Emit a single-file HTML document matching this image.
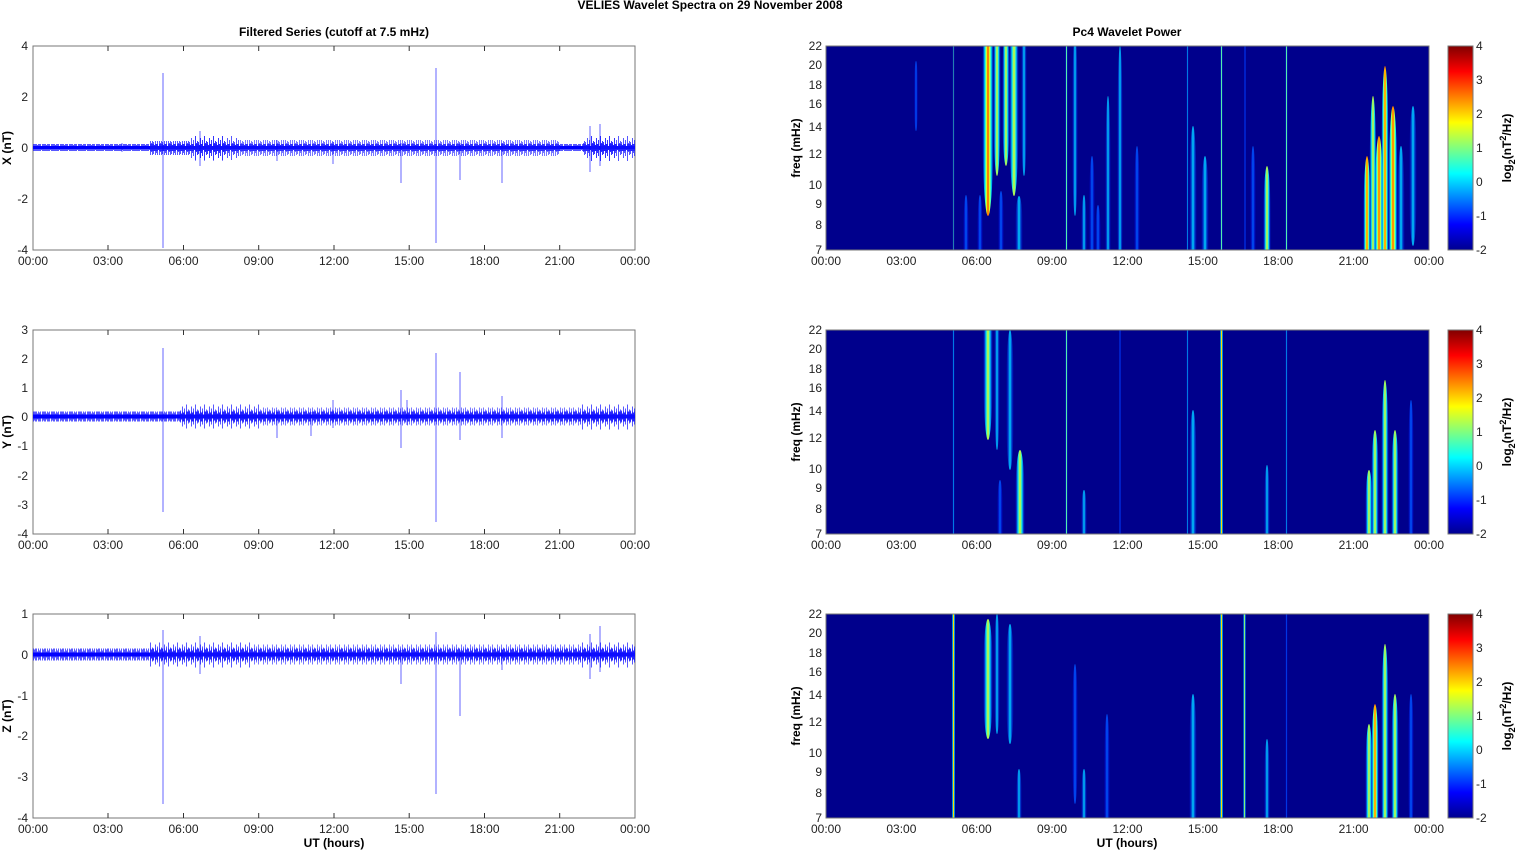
<!DOCTYPE html>
<html><head><meta charset="utf-8"><style>
html,body{margin:0;padding:0;background:#fff;}
svg{display:block;font-family:"Liberation Sans",sans-serif;}
.t{font-size:12px;fill:#222;}
.b{font-size:12px;font-weight:bold;fill:#000;}
</style></head><body>
<svg width="1515" height="851" viewBox="0 0 1515 851" xmlns="http://www.w3.org/2000/svg">
<defs>
<clipPath id="cp"><rect x="826" y="0" width="603" height="204"/></clipPath>
<linearGradient id="jet" x1="0" y1="1" x2="0" y2="0">
<stop offset="0" stop-color="#00008f"/><stop offset="0.125" stop-color="#0000ff"/><stop offset="0.375" stop-color="#00ffff"/><stop offset="0.625" stop-color="#ffff00"/><stop offset="0.875" stop-color="#ff0000"/><stop offset="1" stop-color="#800000"/>
</linearGradient>
<linearGradient id="gc" x1="0" x2="1"><stop offset="0" stop-color="#0000ff" stop-opacity="0"/><stop offset="0.5" stop-color="#00d8ff"/><stop offset="1" stop-color="#0000ff" stop-opacity="0"/></linearGradient>
<linearGradient id="gb" x1="0" x2="1"><stop offset="0" stop-color="#0000ff" stop-opacity="0"/><stop offset="0.5" stop-color="#0060ff"/><stop offset="1" stop-color="#0000ff" stop-opacity="0"/></linearGradient>
<linearGradient id="gy" x1="0" x2="1"><stop offset="0" stop-color="#0000ff" stop-opacity="0"/><stop offset="0.3" stop-color="#00e0ff"/><stop offset="0.5" stop-color="#e0ff20"/><stop offset="0.7" stop-color="#00e0ff"/><stop offset="1" stop-color="#0000ff" stop-opacity="0"/></linearGradient>
<linearGradient id="gr" x1="0" x2="1"><stop offset="0" stop-color="#0000ff" stop-opacity="0"/><stop offset="0.25" stop-color="#00ffff"/><stop offset="0.4" stop-color="#ffff00"/><stop offset="0.5" stop-color="#ff3000"/><stop offset="0.6" stop-color="#ffff00"/><stop offset="0.75" stop-color="#00ffff"/><stop offset="1" stop-color="#0000ff" stop-opacity="0"/></linearGradient>
<linearGradient id="gl" x1="0" x2="1"><stop offset="0" stop-color="#0000ff" stop-opacity="0"/><stop offset="0.5" stop-color="#40e0a0"/><stop offset="1" stop-color="#0000ff" stop-opacity="0"/></linearGradient>
<pattern id="nz" width="9" height="40" patternUnits="userSpaceOnUse" y="0">
<path d="M0.5,14V26M1.5,17V23M2.5,10V30M3.5,16V25M4.5,12V28M5.5,18V22M6.5,8V33M7.5,15V24M8.5,13V27" stroke="#1010ff" stroke-width="1" opacity=".7"/>
</pattern>
<g id="xt" class="t" text-anchor="middle">
<text x="33" y="219">00:00</text><text x="108" y="219">03:00</text><text x="183.5" y="219">06:00</text><text x="258.7" y="219">09:00</text><text x="334" y="219">12:00</text><text x="409.2" y="219">15:00</text><text x="484.5" y="219">18:00</text><text x="559.7" y="219">21:00</text><text x="635" y="219">00:00</text>
</g>
<g id="xtick" stroke="#333" stroke-width="1">
<path d="M108,0v5M183.5,0v5M258.7,0v5M334,0v5M409.2,0v5M484.5,0v5M559.7,0v5M108,204v-5M183.5,204v-5M258.7,204v-5M334,204v-5M409.2,204v-5M484.5,204v-5M559.7,204v-5"/>
</g>
<g id="spec-axes">
<rect x="826" y="0" width="603" height="204" fill="none" stroke="#777" stroke-width="1"/>
<g class="t" text-anchor="end">
<text x="822" y="4">22</text><text x="822" y="23">20</text><text x="822" y="43">18</text><text x="822" y="62">16</text><text x="822" y="85">14</text><text x="822" y="112">12</text><text x="822" y="143">10</text><text x="822" y="162">9</text><text x="822" y="183">8</text><text x="822" y="208">7</text>
</g>
<g class="t" text-anchor="middle">
<text x="826" y="219">00:00</text><text x="901.4" y="219">03:00</text><text x="976.7" y="219">06:00</text><text x="1052" y="219">09:00</text><text x="1127.5" y="219">12:00</text><text x="1202.9" y="219">15:00</text><text x="1278.2" y="219">18:00</text><text x="1353.6" y="219">21:00</text><text x="1429" y="219">00:00</text>
</g>
<text class="b" transform="translate(800,102) rotate(-90)" text-anchor="middle">freq (mHz)</text>
<rect x="1448" y="0" width="25" height="204" fill="url(#jet)" stroke="#777"/>
<g class="t"><text x="1476" y="4">4</text><text x="1476" y="38">3</text><text x="1476" y="72">2</text><text x="1476" y="106">1</text><text x="1476" y="140">0</text><text x="1476" y="174">-1</text><text x="1476" y="208">-2</text></g>
<text class="b" transform="translate(1511,102) rotate(-90)" text-anchor="middle">log<tspan font-size="9" dy="4">2</tspan><tspan dy="-4">(nT</tspan><tspan font-size="9" dy="-5">2</tspan><tspan dy="5">/Hz)</tspan></text>
</g>
</defs>

<text class="b" x="710" y="9" text-anchor="middle" font-size="11">VELIES Wavelet Spectra on 29 November  2008</text>
<text class="b" x="334" y="36" text-anchor="middle">Filtered Series (cutoff at 7.5 mHz)</text>
<text class="b" x="1127" y="36" text-anchor="middle">Pc4 Wavelet Power</text>

<!-- LEFT PANEL 1 -->
<g transform="translate(0,46)">
<rect x="33" y="0" width="602" height="204" fill="#fff" stroke="#777"/>
<use href="#xtick"/>
<g transform="translate(0,82)">
<rect x="33" y="16" width="602" height="7" fill="url(#nz)"/>
<rect x="33" y="18" width="602" height="3" fill="#0000ff"/>
<rect x="150" y="13" width="40" height="14" fill="url(#nz)"/>
<rect x="190" y="8" width="50" height="24" fill="url(#nz)"/>
<rect x="195" y="2" width="30" height="34" fill="url(#nz)" opacity=".7"/>
<rect x="240" y="12" width="320" height="16" fill="url(#nz)" opacity=".8"/>
<rect x="583" y="4" width="52" height="30" fill="url(#nz)"/>
<rect x="590" y="0" width="25" height="38" fill="url(#nz)" opacity=".7"/>
</g>
<g stroke="#0000ff" stroke-width="1" opacity=".6">
<path d="M163,27V202M436,22V197M401,97V137M460,97V134M502,97V137M200,85V120M277,94V115M333,96V118M590,80V126M600,78V120M122,97V106"/>
</g>
<g class="t" text-anchor="end"><text x="28" y="4">4</text><text x="28" y="55">2</text><text x="28" y="106">0</text><text x="28" y="157">-2</text><text x="28" y="208">-4</text></g>
<use href="#xt"/>
<text class="b" transform="translate(11,102) rotate(-90)" text-anchor="middle">X (nT)</text>
</g>

<!-- LEFT PANEL 2 -->
<g transform="translate(0,330)">
<rect x="33" y="0" width="602" height="204" fill="#fff" stroke="#777"/>
<use href="#xtick"/>
<g transform="translate(0,66.5)">
<rect x="33" y="15" width="602" height="10" fill="url(#nz)"/>
<rect x="33" y="18" width="602" height="4" fill="#0000ff"/>
<rect x="180" y="8" width="80" height="24" fill="url(#nz)"/>
<rect x="260" y="11" width="320" height="18" fill="url(#nz)" opacity=".8"/>
<rect x="580" y="6" width="55" height="28" fill="url(#nz)"/>
</g>
<g stroke="#0000ff" stroke-width="1" opacity=".6">
<path d="M163,18V182M436,23V192M401,60V118M460,42V110M502,66V108M277,80V108M311,82V106M333,70V98M407,70V95"/>
</g>
<g class="t" text-anchor="end"><text x="28" y="4">3</text><text x="28" y="33">2</text><text x="28" y="62">1</text><text x="28" y="91">0</text><text x="28" y="120">-1</text><text x="28" y="150">-2</text><text x="28" y="179">-3</text><text x="28" y="208">-4</text></g>
<use href="#xt"/>
<text class="b" transform="translate(11,102) rotate(-90)" text-anchor="middle">Y (nT)</text>
</g>

<!-- LEFT PANEL 3 -->
<g transform="translate(0,614)">
<rect x="33" y="0" width="602" height="204" fill="#fff" stroke="#777"/>
<use href="#xtick"/>
<g transform="translate(0,20.5)">
<rect x="33" y="14" width="602" height="12" fill="url(#nz)"/>
<rect x="33" y="18" width="602" height="4" fill="#0000ff"/>
<rect x="150" y="8" width="40" height="24" fill="url(#nz)"/>
<rect x="190" y="5" width="60" height="30" fill="url(#nz)"/>
<rect x="250" y="10" width="330" height="20" fill="url(#nz)" opacity=".8"/>
<rect x="580" y="2" width="55" height="36" fill="url(#nz)"/>
</g>
<g stroke="#0000ff" stroke-width="1" opacity=".6">
<path d="M163,16V190M436,18V180M401,36V70M460,36V102M502,36V56M200,22V60M590,20V65M600,12V58"/>
</g>
<g class="t" text-anchor="end"><text x="28" y="4">1</text><text x="28" y="45">0</text><text x="28" y="86">-1</text><text x="28" y="126">-2</text><text x="28" y="167">-3</text><text x="28" y="208">-4</text></g>
<use href="#xt"/>
<text class="b" transform="translate(11,102) rotate(-90)" text-anchor="middle">Z (nT)</text>
</g>
<text class="b" x="334" y="847" text-anchor="middle">UT (hours)</text>
<text class="b" x="1127" y="847" text-anchor="middle">UT (hours)</text>

<!-- RIGHT PANEL 1 -->
<g transform="translate(0,46)">
<rect x="826" y="0" width="603" height="204" fill="#00008c"/>
<g clip-path="url(#cp)">
<rect x="952.5" y="0" width="2" height="204" fill="url(#gl)"/>
<ellipse cx="988" cy="60" rx="6" ry="110" fill="url(#gr)"/>
<ellipse cx="997" cy="40" rx="4" ry="90" fill="url(#gy)"/>
<ellipse cx="1006" cy="50" rx="4" ry="70" fill="url(#gy)"/>
<ellipse cx="1014" cy="50" rx="5" ry="100" fill="url(#gy)"/>
<ellipse cx="1019" cy="190" rx="4" ry="40" fill="url(#gc)"/>
<ellipse cx="1024" cy="50" rx="3" ry="80" fill="url(#gc)"/>
<ellipse cx="966" cy="204" rx="3" ry="55" fill="url(#gb)"/>
<ellipse cx="980" cy="204" rx="3" ry="55" fill="url(#gb)"/>
<ellipse cx="1001" cy="190" rx="3" ry="45" fill="url(#gb)"/>
<rect x="1065.5" y="0" width="2" height="204" fill="url(#gy)"/>
<ellipse cx="1075" cy="80" rx="3" ry="90" fill="url(#gc)"/>
<ellipse cx="1084" cy="204" rx="3" ry="55" fill="url(#gc)"/>
<ellipse cx="1098" cy="204" rx="3" ry="45" fill="url(#gb)"/>
<ellipse cx="1108" cy="160" rx="3" ry="110" fill="url(#gc)"/>
<ellipse cx="1120" cy="120" rx="3" ry="120" fill="url(#gc)"/>
<ellipse cx="1137" cy="170" rx="3" ry="70" fill="url(#gb)"/>
<ellipse cx="1092" cy="170" rx="3" ry="60" fill="url(#gb)"/>
<rect x="1186.5" y="0" width="2" height="204" fill="url(#gc)"/>
<ellipse cx="1193" cy="170" rx="4" ry="90" fill="url(#gc)"/>
<ellipse cx="1205" cy="180" rx="4" ry="70" fill="url(#gc)"/>
<rect x="1220.5" y="0" width="2" height="204" fill="url(#gy)"/>
<rect x="1244" y="0" width="2" height="204" fill="url(#gb)"/>
<ellipse cx="1253" cy="170" rx="3" ry="70" fill="url(#gb)"/>
<ellipse cx="1267" cy="190" rx="4" ry="70" fill="url(#gy)"/>
<rect x="1285.5" y="0" width="2" height="204" fill="url(#gy)"/>
<ellipse cx="1367" cy="200" rx="4" ry="90" fill="url(#gr)"/>
<ellipse cx="1373" cy="180" rx="4" ry="130" fill="url(#gy)"/>
<ellipse cx="1379" cy="200" rx="5" ry="110" fill="url(#gr)"/>
<ellipse cx="1385" cy="150" rx="4" ry="130" fill="url(#gr)"/>
<ellipse cx="1393" cy="180" rx="5" ry="120" fill="url(#gr)"/>
<ellipse cx="1401" cy="190" rx="4" ry="90" fill="url(#gc)"/>
<ellipse cx="1413" cy="130" rx="4" ry="70" fill="url(#gc)"/>
<ellipse cx="916" cy="50" rx="2" ry="35" fill="url(#gb)"/>
</g>
<use href="#spec-axes"/>
</g>

<!-- RIGHT PANEL 2 -->
<g transform="translate(0,330)">
<rect x="826" y="0" width="603" height="204" fill="#00008c"/>
<g clip-path="url(#cp)">
<rect x="952.5" y="0" width="2" height="204" fill="url(#gc)"/>
<ellipse cx="988" cy="30" rx="5" ry="80" fill="url(#gy)"/>
<ellipse cx="997" cy="40" rx="3" ry="80" fill="url(#gc)"/>
<ellipse cx="1010" cy="70" rx="4" ry="70" fill="url(#gc)"/>
<ellipse cx="1020" cy="180" rx="5" ry="60" fill="url(#gy)"/>
<ellipse cx="1000" cy="190" rx="3" ry="40" fill="url(#gb)"/>
<rect x="1065.5" y="0" width="2" height="204" fill="url(#gy)"/>
<ellipse cx="1084" cy="195" rx="3" ry="35" fill="url(#gc)"/>
<rect x="1119" y="0" width="2" height="204" fill="url(#gb)"/>
<rect x="1186.5" y="0" width="2" height="204" fill="url(#gc)"/>
<ellipse cx="1193" cy="160" rx="4" ry="80" fill="url(#gc)"/>
<rect x="1220" y="0" width="3" height="204" fill="url(#gr)"/>
<ellipse cx="1267" cy="190" rx="3" ry="55" fill="url(#gc)"/>
<rect x="1285.5" y="0" width="2" height="204" fill="url(#gc)"/>
<ellipse cx="1369" cy="195" rx="4" ry="55" fill="url(#gy)"/>
<ellipse cx="1375" cy="170" rx="4" ry="70" fill="url(#gy)"/>
<ellipse cx="1385" cy="160" rx="4" ry="110" fill="url(#gy)"/>
<ellipse cx="1395" cy="170" rx="4" ry="70" fill="url(#gy)"/>
<ellipse cx="1411" cy="150" rx="3" ry="80" fill="url(#gb)"/>
</g>
<use href="#spec-axes"/>
</g>

<!-- RIGHT PANEL 3 -->
<g transform="translate(0,614)">
<rect x="826" y="0" width="603" height="204" fill="#00008c"/>
<g clip-path="url(#cp)">
<rect x="952" y="0" width="3" height="204" fill="url(#gr)"/>
<ellipse cx="988" cy="65" rx="5" ry="60" fill="url(#gy)"/>
<ellipse cx="997" cy="60" rx="3" ry="60" fill="url(#gc)"/>
<ellipse cx="1010" cy="70" rx="4" ry="60" fill="url(#gc)"/>
<ellipse cx="1019" cy="195" rx="3" ry="40" fill="url(#gc)"/>
<ellipse cx="1075" cy="120" rx="3" ry="70" fill="url(#gb)"/>
<ellipse cx="1084" cy="195" rx="3" ry="40" fill="url(#gc)"/>
<ellipse cx="1107" cy="170" rx="3" ry="70" fill="url(#gb)"/>
<ellipse cx="1193" cy="160" rx="4" ry="80" fill="url(#gc)"/>
<rect x="1220" y="0" width="3" height="204" fill="url(#gr)"/>
<rect x="1243" y="0" width="3" height="204" fill="url(#gy)"/>
<ellipse cx="1267" cy="185" rx="3" ry="60" fill="url(#gc)"/>
<rect x="1285.5" y="0" width="2" height="204" fill="url(#gb)"/>
<ellipse cx="1369" cy="180" rx="4" ry="70" fill="url(#gy)"/>
<ellipse cx="1375" cy="170" rx="4" ry="80" fill="url(#gr)"/>
<ellipse cx="1385" cy="140" rx="4" ry="110" fill="url(#gy)"/>
<ellipse cx="1395" cy="160" rx="4" ry="80" fill="url(#gy)"/>
<ellipse cx="1411" cy="150" rx="3" ry="70" fill="url(#gb)"/>
</g>
<use href="#spec-axes"/>
</g>
</svg>
</body></html>
